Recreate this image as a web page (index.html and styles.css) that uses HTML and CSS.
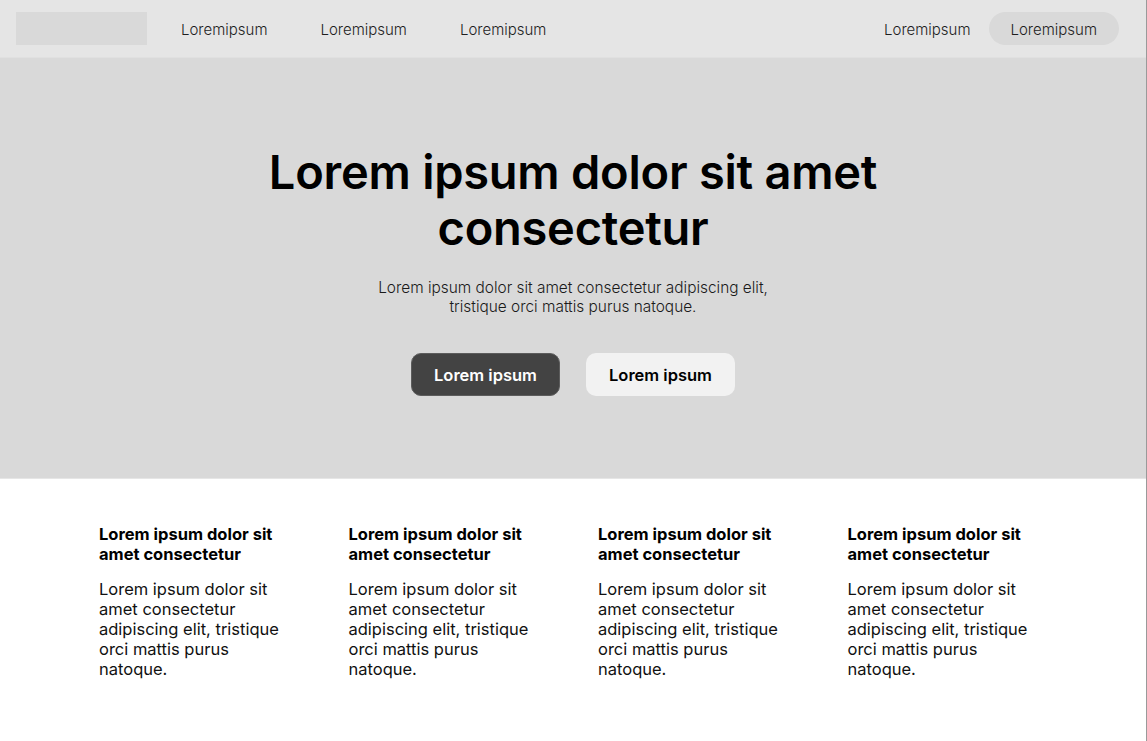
FILE: index.html
```html
<!DOCTYPE html>
<html lang="en">
<head>
<meta charset="utf-8">
<title>Landing</title>
<link rel="stylesheet" href="styles.css">
</head>
<body>
<div class="page">
  <header class="nav">
    <div class="logo"></div>
    <nav class="nav-links">
      <a class="nav-link">Loremipsum</a>
      <a class="nav-link">Loremipsum</a>
      <a class="nav-link">Loremipsum</a>
    </nav>
    <div class="nav-right">
      <a class="nav-link">Loremipsum</a>
      <a class="nav-link pill">Loremipsum</a>
    </div>
  </header>
  <section class="hero">
    <h1 class="hero-title">Lorem ipsum dolor sit amet<br>consectetur</h1>
    <p class="hero-sub">Lorem ipsum dolor sit amet consectetur adipiscing elit,<br>tristique orci mattis purus natoque.</p>
    <div class="hero-actions">
      <a class="btn btn-dark">Lorem ipsum</a>
      <a class="btn btn-light">Lorem ipsum</a>
    </div>
  </section>
  <section class="features">
    <div class="feature">
      <h3 class="feature-title">Lorem ipsum dolor sit amet consectetur</h3>
      <p class="feature-text">Lorem ipsum dolor sit amet consectetur adipiscing elit, tristique orci mattis purus natoque.</p>
    </div>
    <div class="feature">
      <h3 class="feature-title">Lorem ipsum dolor sit amet consectetur</h3>
      <p class="feature-text">Lorem ipsum dolor sit amet consectetur adipiscing elit, tristique orci mattis purus natoque.</p>
    </div>
    <div class="feature">
      <h3 class="feature-title">Lorem ipsum dolor sit amet consectetur</h3>
      <p class="feature-text">Lorem ipsum dolor sit amet consectetur adipiscing elit, tristique orci mattis purus natoque.</p>
    </div>
    <div class="feature">
      <h3 class="feature-title">Lorem ipsum dolor sit amet consectetur</h3>
      <p class="feature-text">Lorem ipsum dolor sit amet consectetur adipiscing elit, tristique orci mattis purus natoque.</p>
    </div>
  </section>
</div>
</body>
</html>
```

FILE: styles.css
```css
* { box-sizing: border-box; }
html, body { margin: 0; padding: 0; background: #ffffff; }
body {
  font-family: Inter, "Noto Sans", "Liberation Sans", sans-serif;
  color: #000;
}
.page {
  width: 1147px;
  min-height: 741px;
  border-right: 1px solid #9a9a9a;
  background: #fff;
}
.nav {
  height: 58px;
  background: #e5e5e5;
  display: flex;
  align-items: center;
  padding: 0 27px 0 16px;
  border-bottom: 1px solid #e0e0e0;
}
.logo {
  width: 131px;
  height: 33px;
  background: #d9d9d9;
  margin-top: -1px;
}
.nav-links {
  display: flex;
  gap: 53px;
  margin-left: 34px;
  padding-top: 2px;
}
.nav-link {
  font-size: 15px;
  font-weight: 300;
  color: #1e1e1e;
  line-height: 19px;
}
.nav-right {
  margin-left: auto;
  display: flex;
  align-items: center;
  gap: 18px;
}
.nav-right > .nav-link:first-child {
  padding-top: 2px;
}
.pill {
  background: #d9d9d9;
  border-radius: 17px;
  height: 33px;
  padding: 8px 22px 6px;
}
.hero {
  background: #d9d9d9;
  height: 421px;
  padding-top: 86px;
  display: flex;
  flex-direction: column;
  align-items: center;
  text-align: center;
  border-bottom: 1px solid #e6e6e6;
}
.hero-title {
  margin: 0;
  font-size: 47px;
  line-height: 56px;
  font-weight: 600;
  letter-spacing: -0.25px;
}
.hero-sub {
  margin: 22px 0 0;
  font-size: 15.4px;
  line-height: 19px;
  font-weight: 300;
  color: #1a1a1a;
}
.hero-actions {
  display: flex;
  gap: 26px;
  margin-top: 37px;
}
.btn {
  width: 149px;
  height: 43px;
  border-radius: 10px;
  display: flex;
  align-items: center;
  justify-content: center;
  font-size: 16.5px;
  font-weight: 600;
}
.btn-dark {
  background: #434343;
  color: #fff;
  border: 1px solid #5c5c5c;
}
.btn-light {
  background: #f2f2f2;
  color: #000;
}
.features {
  display: grid;
  grid-template-columns: repeat(4, 190px);
  column-gap: 59.5px;
  padding: 45px 0 0 99px;
}
.feature-title {
  margin: 0;
  font-size: 16.5px;
  line-height: 20px;
  font-weight: 700;
}
.feature-text {
  margin: 15px 0 0;
  font-size: 16.5px;
  line-height: 20px;
  font-weight: 400;
  color: #111;
}
```
